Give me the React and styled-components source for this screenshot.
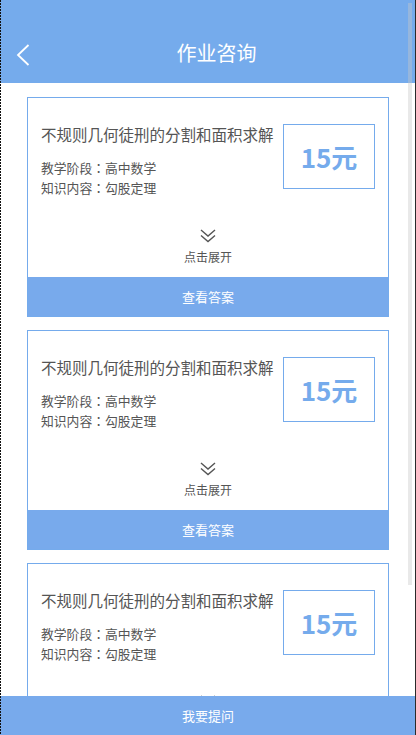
import styled, { createGlobalStyle } from "styled-components";

const GlobalStyle = createGlobalStyle`
    html, body {
        margin: 0;
        padding: 0;
        background: #fff;
    }

    * {
        box-sizing: border-box;
    }
`;

const questions = [
    {
        id: 1,
        title: "不规则几何徒刑的分割和面积求解",
        stage: "高中数学",
        topic: "勾股定理",
        price: 15,
    },
    {
        id: 2,
        title: "不规则几何徒刑的分割和面积求解",
        stage: "高中数学",
        topic: "勾股定理",
        price: 15,
    },
    {
        id: 3,
        title: "不规则几何徒刑的分割和面积求解",
        stage: "高中数学",
        topic: "勾股定理",
        price: 15,
    },
];

function BackIcon() {
    return (
        <svg width="14" height="22" viewBox="0 0 14 22">
            <polyline
                points="12.5,1 2,11 12.5,21"
                fill="none"
                stroke="#fff"
                strokeWidth="1.8"
            />
        </svg>
    );
}

function DoubleDown() {
    return (
        <svg width="16" height="14" viewBox="0 0 16 14">
            <polyline
                points="1,1 8,7 15,1"
                fill="none"
                stroke="#555"
                strokeWidth="1.4"
            />
            <polyline
                points="1,6.5 8,12.5 15,6.5"
                fill="none"
                stroke="#555"
                strokeWidth="1.4"
            />
        </svg>
    );
}

function QuestionCard({ title, stage, topic, price }) {
    return (
        <Card>
            <CardBody>
                <InfoRow>
                    <Info>
                        <Title>{title}</Title>
                        <Meta>
                            教学阶段<Colon>：</Colon>
                            {stage}
                        </Meta>
                        <Meta>
                            知识内容<Colon>：</Colon>
                            {topic}
                        </Meta>
                    </Info>
                    <Price>{price}元</Price>
                </InfoRow>
                <Expand>
                    <DoubleDown />
                    <span>点击展开</span>
                </Expand>
            </CardBody>
            <AnswerButton>查看答案</AnswerButton>
        </Card>
    );
}

export default function App() {
    return (
        <>
            <GlobalStyle />
            <Screen>
                <Header>
                    <BackButton>
                        <BackIcon />
                    </BackButton>
                    <HeaderTitle>作业咨询</HeaderTitle>
                </Header>
                <List>
                    {questions.map((q) => (
                        <QuestionCard key={q.id} {...q} />
                    ))}
                </List>
                <AskBar>我要提问</AskBar>
                <ScrollThumb />
            </Screen>
        </>
    );
}

const Screen = styled.div`
    position: relative;
    width: 416px;
    height: 735px;
    display: flex;
    flex-direction: column;
    overflow: hidden;
    font-family: "Noto Sans CJK SC", "Liberation Sans", sans-serif;

    /* frame edges: dashed on the left, solid on the right */
    &::before {
        content: "";
        position: absolute;
        top: 0;
        left: 0;
        width: 1px;
        height: 100%;
        background: repeating-linear-gradient(
            to bottom,
            #111 0 2px,
            transparent 2px 3px
        );
        z-index: 2;
    }

    &::after {
        content: "";
        position: absolute;
        top: 0;
        right: 0;
        width: 1px;
        height: 100%;
        background: #2a2a2a;
        z-index: 2;
    }
`;

const Header = styled.header`
    flex: 0 0 83px;
    background-color: #75abec;
    padding: 23px 0 0 17px;
    display: flex;
    align-items: center;
    justify-content: center;
    position: relative;
`;

const BackButton = styled.div`
    position: absolute;
    left: 16px;
    top: 44px;
    display: flex;
`;

const HeaderTitle = styled.h1`
    margin: 0;
    color: #fff;
    font-size: 20px;
    font-weight: 400;
    line-height: 24px;
`;

const List = styled.div`
    flex: 1;
    overflow: hidden;
    padding: 14px 27px 0;
    display: flex;
    flex-direction: column;
    gap: 13px;
`;

const Card = styled.div`
    flex-shrink: 0;
    border: 1px solid #75abec;
    display: flex;
    flex-direction: column;
`;

const CardBody = styled.div`
    padding: 26px 13px 12px;
`;

const InfoRow = styled.div`
    display: flex;
    justify-content: space-between;
    align-items: flex-start;
    height: 74px;
`;

const Info = styled.div`
    display: flex;
    flex-direction: column;
`;

const Title = styled.p`
    margin: 0 0 14px;
    font-size: 15.5px;
    line-height: 20px;
    color: #555;
`;

const Meta = styled.p`
    margin: 0;
    font-size: 12.8px;
    line-height: 20px;
    color: #555;
`;

const Colon = styled.span`
    font-family: "Noto Sans CJK TC", sans-serif;
`;

const Price = styled.div`
    width: 92px;
    height: 65px;
    border: 1px solid #75abec;
    display: flex;
    align-items: center;
    justify-content: center;
    color: #75abec;
    font-size: 26px;
    font-weight: 700;
`;

const Expand = styled.div`
    margin-top: 31px;
    display: flex;
    flex-direction: column;
    align-items: center;
    gap: 6px;
    color: #555;

    & span {
        font-size: 12px;
        line-height: 16px;
    }
`;

const AnswerButton = styled.div`
    height: 39px;
    background-color: #78aaec;
    color: #fff;
    font-size: 13px;
    display: flex;
    align-items: center;
    justify-content: center;
`;

const AskBar = styled.footer`
    flex: 0 0 39px;
    background-color: #78aaec;
    color: #fff;
    font-size: 13px;
    display: flex;
    align-items: center;
    justify-content: center;
`;

const ScrollThumb = styled.div`
    position: absolute;
    top: 3px;
    right: 4px;
    width: 4px;
    height: 582px;
    background-color: rgba(200, 200, 200, 0.4);
`;
